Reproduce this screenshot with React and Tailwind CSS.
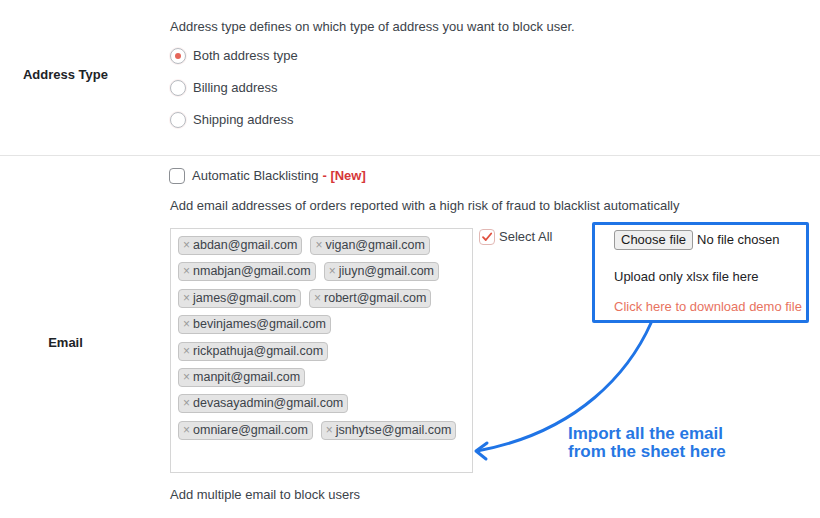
import React from "react";

const emails = [
  ["abdan@gmail.com", "vigan@gmail.com"],
  ["nmabjan@gmail.com", "jiuyn@gmail.com"],
  ["james@gmail.com", "robert@gmail.com"],
  ["bevinjames@gmail.com"],
  ["rickpathuja@gmail.com"],
  ["manpit@gmail.com"],
  ["devasayadmin@gmail.com"],
  ["omniare@gmail.com", "jsnhytse@gmail.com"],
];

function Radio({ checked, label }) {
  return (
    <div className="flex items-center h-[32px]">
      <span className="w-[16px] h-[16px] rounded-full border border-[#b7bcc1] bg-white flex items-center justify-center shadow-[0_0_0_1px_rgba(240,200,200,0.25)]">
        {checked && <span className="w-[6px] h-[6px] rounded-full bg-[#e5665a]" />}
      </span>
      <span className="ml-[7px]">{label}</span>
    </div>
  );
}

function Tag({ text }) {
  return (
    <span className="inline-flex items-center h-[19px] pl-[4px] pr-[4px] rounded-[4px] border border-[#c4c4c4] bg-[#e4e4e4] text-[#3c434a] text-[12.5px] leading-[17px]">
      <span className="text-[#9a9a9a] text-[12px] mr-[3px] leading-[17px]">×</span>
      <span>{text}</span>
    </span>
  );
}

export default function App() {
  return (
    <div
      className="relative w-[820px] h-[518px] overflow-hidden bg-white text-[13px] text-[#3c434a]"
      style={{ fontFamily: '"Liberation Sans", Arial, Helvetica, sans-serif' }}
    >
      {/* Section 1 */}
      <div className="flex border-b border-[#e4e4e4] h-[156px]">
        <div className="w-[131px] flex items-center justify-center pb-[6px] font-bold text-[#1d2327]">
          Address Type
        </div>
        <div className="ml-[39px] pt-[17px]">
          <div className="leading-[20px]">
            Address type defines on which type of address you want to block user.
          </div>
          <div className="mt-[3px]">
            <Radio checked label="Both address type" />
            <Radio label="Billing address" />
            <Radio label="Shipping address" />
          </div>
        </div>
      </div>

      {/* Section 2 */}
      <div className="flex h-[374px]">
        <div className="w-[131px] flex items-center justify-center font-bold text-[#1d2327]">
          Email
        </div>
        <div className="ml-[39px] pt-[10px]">
          <div className="flex items-center h-[20px]">
            <span className="w-[16px] h-[16px] rounded-[4px] border border-[#8c8f94] bg-white -ml-[1px]" />
            <span className="ml-[7px]">Automatic Blacklisting</span>
            <span className="ml-[4px] font-bold text-[#d63638]">- [New]</span>
          </div>
          <div className="mt-[10px] leading-[20px]">
            Add email addresses of orders reported with a high risk of fraud to blacklist automatically
          </div>
          <div className="flex items-start mt-[6px]">
            <div className="mt-[6px] w-[303px] h-[245px] border border-[#d6d6d6] bg-white pt-[7px] pl-[7px] pr-[4px]">
              <div className="flex flex-col gap-y-[7.4px]">
                {emails.map((row, i) => (
                  <div key={i} className="flex gap-x-[8px]">
                    {row.map((e) => (
                      <Tag key={e} text={e} />
                    ))}
                  </div>
                ))}
              </div>
            </div>
            <div className="w-[119px] pl-[6px] mt-[7px] flex items-center h-[16px]">
              <span className="w-[16px] h-[16px] rounded-[4px] border border-[#e2b8b4] bg-white flex items-center justify-center">
                <svg width="12" height="12" viewBox="0 0 12 12">
                  <path d="M2 6.2 L4.8 9 L10.2 2.5" fill="none" stroke="#e0503f" strokeWidth="1.8" strokeLinecap="round" strokeLinejoin="round" />
                </svg>
              </span>
              <span className="ml-[4px]">Select All</span>
            </div>
            <div className="w-[217px] h-[101px] border-[3px] border-[#1f74e6] rounded-[2px] pl-[19px] pt-[5px]">
              <div className="flex items-center">
                <span className="h-[20px] px-[6px] flex items-center rounded-[3px] border border-[#9a9a9a] bg-[#efefef] text-[#1a1a1a] text-[13px]">
                  Choose file
                </span>
                <span className="ml-[4px] text-[#1a1a1a]">No file chosen</span>
              </div>
              <div className="mt-[17px] leading-[20px] text-[#1d2327]">Upload only xlsx file here</div>
              <div className="mt-[10px] leading-[20px] text-[#e8735f]">Click here to download demo file</div>
            </div>
          </div>
          <div className="mt-[12px] leading-[20px]">Add multiple email to block users</div>
        </div>
      </div>

      {/* Annotation arrow */}
      <svg className="absolute left-0 top-0 pointer-events-none" width="820" height="518" viewBox="0 0 820 518">
        <path d="M651 323 C 630 370, 580 432, 477 451" fill="none" stroke="#1f74e6" strokeWidth="3" strokeLinecap="round" />
        <path d="M487 443 L476 451 L486 459" fill="none" stroke="#1f74e6" strokeWidth="3" strokeLinecap="round" strokeLinejoin="round" />
      </svg>
      <div className="absolute left-[568px] top-[425px] text-[17px] leading-[18px] font-bold text-[#2777e3]">
        <div>Import all the email</div>
        <div>from the sheet here</div>
      </div>
    </div>
  );
}
